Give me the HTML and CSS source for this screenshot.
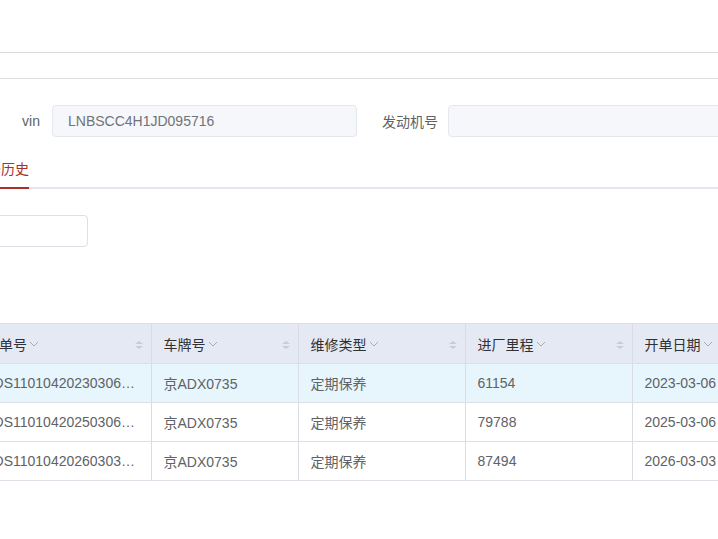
FILE: index.html
```html
<!DOCTYPE html>
<html lang="zh-CN">
<head>
    <meta charset="UTF-8">
    <meta name="viewport" content="width=device-width, initial-scale=1.0">
    <title>维修历史</title>
    <link rel="stylesheet" href="styles.css">
</head>
<body>
    <div class="topbar"></div>
    <div class="subbar"></div>
    <div class="page">
        <!-- vehicle info -->
        <div class="form-row">
            <div class="form-item">
                <label class="form-label">vin</label>
                <div class="form-input">LNBSCC4H1JD095716</div>
            </div>
            <div class="form-item">
                <label class="form-label narrow">发动机号</label>
                <div class="form-input wide"></div>
            </div>
        </div>

        <!-- tabs -->
        <div class="tabs">
            <div class="tab active">维修历史</div>
        </div>

        <div class="search-box"></div>

        <!-- history table -->
        <table class="grid">
            <colgroup>
                <col style="width: 178px">
                <col style="width: 147px">
                <col style="width: 167px">
                <col style="width: 167px">
                <col style="width: 160px">
                <col style="width: 160px">
            </colgroup>
            <thead>
                <tr>
                    <th><span class="th-text">工单号<svg class="chev" viewBox="0 0 10 6"><polyline points="1,1 5,5 9,1"/></svg></span><span class="sorter"></span></th>
                    <th><span class="th-text">车牌号<svg class="chev" viewBox="0 0 10 6"><polyline points="1,1 5,5 9,1"/></svg></span><span class="sorter"></span></th>
                    <th><span class="th-text">维修类型<svg class="chev" viewBox="0 0 10 6"><polyline points="1,1 5,5 9,1"/></svg></span><span class="sorter"></span></th>
                    <th><span class="th-text">进厂里程<svg class="chev" viewBox="0 0 10 6"><polyline points="1,1 5,5 9,1"/></svg></span><span class="sorter"></span></th>
                    <th><span class="th-text">开单日期<svg class="chev" viewBox="0 0 10 6"><polyline points="1,1 5,5 9,1"/></svg></span><span class="sorter"></span></th>
                    <th><span class="th-text">结算日期</span></th>
                </tr>
            </thead>
            <tbody>
                <tr class="current">
                    <td>TDS1101042023030600012</td>
                    <td>京ADX0735</td>
                    <td>定期保养</td>
                    <td>61154</td>
                    <td>2023-03-06</td>
                    <td>2023-03-06</td>
                </tr>
                <tr>
                    <td>TDS1101042025030600008</td>
                    <td>京ADX0735</td>
                    <td>定期保养</td>
                    <td>79788</td>
                    <td>2025-03-06</td>
                    <td>2025-03-06</td>
                </tr>
                <tr>
                    <td>TDS1101042026030300005</td>
                    <td>京ADX0735</td>
                    <td>定期保养</td>
                    <td>87494</td>
                    <td>2026-03-03</td>
                    <td>2026-03-03</td>
                </tr>
            </tbody>
        </table>
    </div>
</body>
</html>
```

FILE: styles.css
```css
html, body {
    overflow: hidden;
}
body {
    margin: 0;
    padding: 0;
    background-color: #fff;
    font-family: "Liberation Sans", "Noto Sans CJK SC", sans-serif;
    font-size: 14px;
    color: #606266;
}
.topbar {
    height: 52px;
    border-bottom: 1px solid #dcdcdc;
}
.subbar {
    height: 25px;
    border-bottom: 1px solid #dcdcdc;
}
.page {
    margin-left: -27px;
    width: 960px;
}
.form-row {
    display: flex;
    gap: 12px;
    margin-top: 26px;
}
.form-item {
    display: flex;
    align-items: center;
}
.form-label {
    width: 79px;
    padding-right: 12px;
    box-sizing: border-box;
    text-align: right;
    color: #606266;
}
.form-label.narrow {
    padding-right: 10px;
}
.form-input {
    width: 305px;
    height: 32px;
    box-sizing: border-box;
    padding: 0 15px;
    line-height: 30px;
    background-color: #f5f7fa;
    border: 1px solid #e4e7ed;
    border-radius: 4px;
    color: #707378;
}
.form-input.wide {
    width: 400px;
}
.tabs {
    margin-top: 12px;
    height: 40px;
    box-sizing: border-box;
    border-bottom: 2px solid #e4e7ed;
    display: flex;
}
.tab {
    height: 40px;
    line-height: 40px;
    box-sizing: border-box;
    color: #606266;
}
.tab.active {
    color: #a8302a;
    border-bottom: 2px solid #a8302a;
}
.search-box {
    margin-top: 26px;
    width: 115px;
    height: 32px;
    box-sizing: border-box;
    border: 1px solid #dcdfe6;
    border-radius: 4px;
}
.grid {
    margin-top: 76px;
    table-layout: fixed;
    border-collapse: collapse;
    width: 979px;
}
.grid th,
.grid td {
    text-align: left;
    padding: 0 12px;
    white-space: nowrap;
    overflow: hidden;
    text-overflow: ellipsis;
    border-right: 1px solid #d9dce3;
}
.grid th {
    position: relative;
    height: 39px;
    background-color: #e5e9f3;
    border-top: 1px solid #dcdfe6;
    border-bottom: 1px solid #dcdfe6;
    font-weight: normal;
    color: #303133;
}
.grid td {
    height: 38px;
    border-bottom: 1px solid #dcdfe6;
    color: #606266;
}
.grid tr.current td {
    background-color: #e7f5fd;
}
.th-text {
    display: inline-flex;
    align-items: center;
}
.chev {
    width: 10px;
    height: 6px;
    margin-left: 2px;
    fill: none;
    stroke: #a8abb2;
    stroke-width: 1;
}
.sorter {
    position: absolute;
    right: 8px;
    top: 17px;
    width: 8px;
    height: 8px;
}
.sorter::before,
.sorter::after {
    content: "";
    position: absolute;
    left: 0;
    border-left: 4px solid transparent;
    border-right: 4px solid transparent;
}
.sorter::before {
    top: 0;
    border-bottom: 3px solid #c9ccd3;
}
.sorter::after {
    top: 5px;
    border-top: 3px solid #c9ccd3;
}
```
